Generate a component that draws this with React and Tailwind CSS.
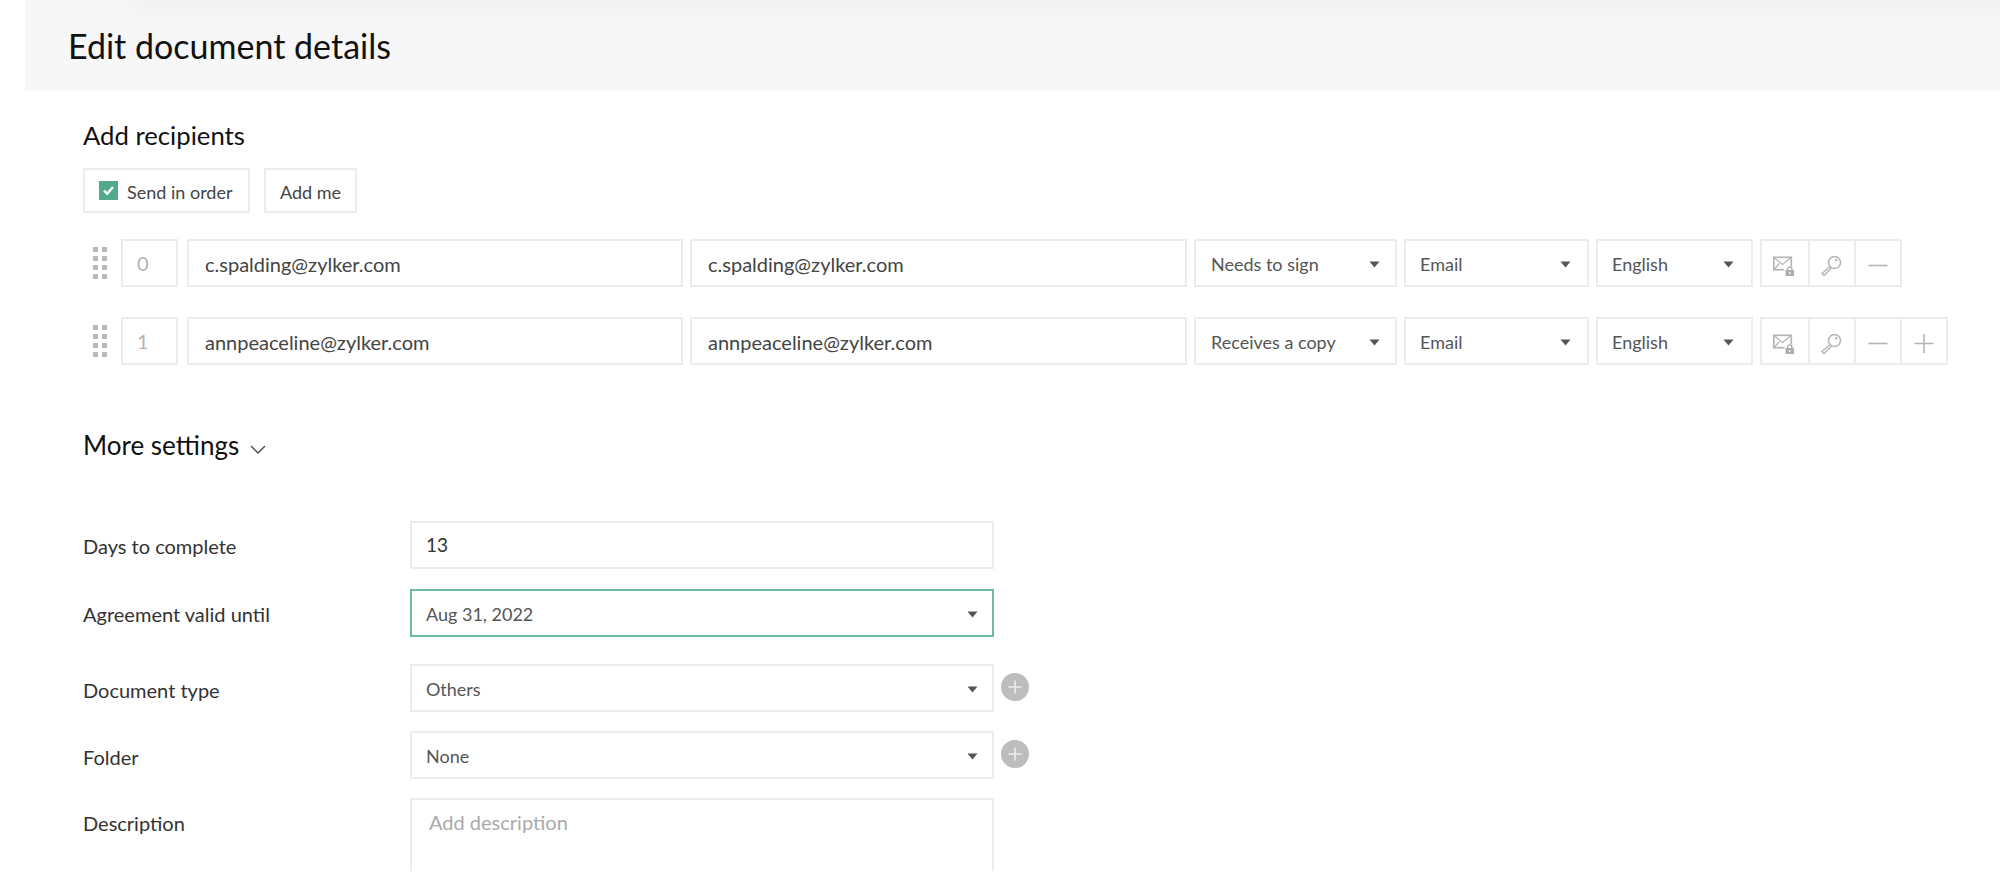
const FONT = "font-['Lato',sans-serif]";

function Caret({ className = "" }) {
  return (
    <svg width="11" height="7" viewBox="0 0 11 7" className={`shrink-0 mt-[2px] ${className}`}>
      <path d="M0.5 0.5h10L5.5 6.5z" fill="#555" />
    </svg>
  );
}

function Box({ w, children, className = "" }) {
  return (
    <div className={`h-[48px] border-2 border-[#ececec] flex items-center shrink-0 bg-white ${className}`} style={{ width: w }}>
      {children}
    </div>
  );
}

function Drag() {
  const dots = [];
  for (let r = 0; r < 4; r++) {
    for (let c = 0; c < 2; c++) {
      dots.push(<rect key={`${r}-${c}`} x={c * 9} y={r * 9} width="5" height="5" fill="#b9b9b9" />);
    }
  }
  return (
    <svg width="14" height="32" viewBox="0 0 14 32" className="ml-[10px] mr-[14px] shrink-0">
      {dots}
    </svg>
  );
}

function MailLock() {
  return (
    <svg width="32" height="32" viewBox="-15 -16 32 32" fill="none" stroke="#b5b5b5">
      <rect x="-10.2" y="-5.7" width="17.5" height="12.4" strokeWidth="1.7" />
      <path d="M-10 -5.5L-1.5 1.5L7 -5.5M-10 6.5L-4.5 0.5" strokeWidth="1.2" />
      <rect x="0.5" y="3.5" width="10.5" height="10" fill="#fff" stroke="none" />
      <rect x="1.5" y="7" width="8.5" height="6" rx="0.5" fill="#adadad" stroke="none" />
      <path d="M3.5 7V6a2.2 2.2 0 0 1 4.4 0V7" strokeWidth="1.3" stroke="#adadad" />
      <circle cx="5.7" cy="10" r="0.9" fill="#fff" stroke="none" />
    </svg>
  );
}

function KeyIcon() {
  return (
    <svg width="32" height="32" viewBox="-15 -16 32 32" fill="none" stroke="#b5b5b5">
      <circle cx="3.5" cy="-0.5" r="6" strokeWidth="1.6" />
      <circle cx="5.2" cy="-2.8" r="1.3" fill="#b5b5b5" stroke="none" />
      <path d="M-1 3.5L-9 10.5L-7 12.5L0.5 5" strokeWidth="1.4" />
    </svg>
  );
}

function MinusIcon() {
  return (
    <svg width="32" height="32" viewBox="-16 -16 32 32" stroke="#b5b5b5" strokeWidth="1.6">
      <path d="M-9.5 2.5H9.5" />
    </svg>
  );
}

function PlusIcon() {
  return (
    <svg width="32" height="32" viewBox="-16 -16 32 32" stroke="#b5b5b5" strokeWidth="1.6">
      <path d="M-9.5 2.5H9.5M0 -7V12" />
    </svg>
  );
}

function Actions({ plus }) {
  const cells = [<MailLock key="m" />, <KeyIcon key="k" />, <MinusIcon key="n" />];
  if (plus) cells.push(<PlusIcon key="p" />);
  return (
    <div className="flex shrink-0 h-[48px] border-2 border-[#ececec] bg-white">
      {cells.map((c, i) => (
        <div key={i} className={`w-[46px] flex items-center justify-center ${i > 0 ? "border-l-2 border-[#ececec]" : ""}`}>
          {c}
        </div>
      ))}
    </div>
  );
}

function Row({ n, email, role, plus, className = "" }) {
  return (
    <div className={`flex items-center ${className}`}>
      <Drag />
      <Box w="57px" className="pl-[14px] mr-[9px] text-[20px] text-[#b3b3b3]">{n}</Box>
      <div className="flex gap-[7px]">
        <Box w="496px" className="pl-[16px] text-[20px] text-[#444]"><span className="mt-[1px]">{email}</span></Box>
        <Box w="497px" className="pl-[16px] text-[20px] text-[#444]"><span className="mt-[1px]">{email}</span></Box>
        <Box w="203px" className="pl-[15px] pr-[15px] justify-between">
          <span className="text-[18px] text-[#555] mt-[3px]">{role}</span>
          <Caret />
        </Box>
        <Box w="185px" className="pl-[14px] pr-[16px] justify-between">
          <span className="text-[18px] text-[#555] mt-[3px]">Email</span>
          <Caret />
        </Box>
        <Box w="157px" className="pl-[14px] pr-[17px] justify-between">
          <span className="text-[18px] text-[#555] mt-[3px]">English</span>
          <Caret />
        </Box>
        <Actions plus={plus} />
      </div>
    </div>
  );
}

function FormRow({ label, children, mt, labelShift = "" }) {
  return (
    <div className={`flex items-center ${mt}`}>
      <div className={`w-[327px] text-[20px] text-[#333] shrink-0 ${labelShift}`}>{label}</div>
      {children}
    </div>
  );
}

function FormSelect({ value, active }) {
  return (
    <div className={`w-[584px] h-[48px] border-2 ${active ? "border-[#6bbda0]" : "border-[#ececec]"} flex items-center justify-between pl-[14px] pr-[14px] bg-white`}>
      <span className="text-[18px] text-[#555] mt-[3px]">{value}</span>
      <Caret />
    </div>
  );
}

function AddCircle() {
  return (
    <div className="w-[28px] h-[28px] rounded-full bg-[#bdbdbd] flex items-center justify-center ml-[7px] -mt-[3px] shrink-0">
      <svg width="14" height="14" viewBox="0 0 14 14" stroke="#eeeeee" strokeWidth="1.5">
        <path d="M0.5 7H13.5M7 0.5V13.5" />
      </svg>
    </div>
  );
}

export default function App() {
  return (
    <div className={`w-full h-[888px] bg-white overflow-hidden ${FONT}`}>
      <div className="h-[871px] overflow-hidden">
        <div className="relative ml-[25px] h-[91px] bg-[#f7f7f7] flex items-center pl-[43px]">
          <div className="absolute top-0 left-[85px] right-0 h-[24px] bg-gradient-to-b from-[#f0f0f0] to-transparent [mask-image:linear-gradient(to_right,transparent,black_60px)]" />
          <h1 className="relative text-[34px] text-[#111] font-normal">Edit document details</h1>
        </div>

        <div className="pl-[83px]">
          <h2 className="text-[25.7px] text-[#111] font-normal mt-[28px] leading-[32px]">Add recipients</h2>

          <div className="flex gap-[14px] mt-[17px]">
            <div className="w-[167px] h-[45px] border-2 border-[#ececec] flex items-center pl-[14px] gap-[9px]">
              <div className="w-[19px] h-[19px] bg-[#52a98c] flex items-center justify-center">
                <svg width="13" height="13" viewBox="0 0 13 13" fill="none" stroke="#fff" strokeWidth="2.4">
                  <path d="M2 6.5L5.2 9.7L11 3" />
                </svg>
              </div>
              <span className="text-[18px] text-[#444] mt-[3px]">Send in order</span>
            </div>
            <div className="w-[93px] h-[45px] border-2 border-[#ececec] flex items-center justify-center">
              <span className="text-[18px] text-[#444] mt-[3px]">Add me</span>
            </div>
          </div>

          <Row n="0" email="c.spalding@zylker.com" role="Needs to sign" className="mt-[26px]" />
          <Row n="1" email="annpeaceline@zylker.com" role="Receives a copy" plus className="mt-[30px]" />

          <div className="flex items-center mt-[64px] h-[34px]">
            <span className="text-[26px] text-[#111] -mt-[2px]">More settings</span>
            <svg width="16" height="9" viewBox="0 0 16 9" fill="none" stroke="#444" strokeWidth="1.3" className="ml-[11px] mt-[6px]">
              <path d="M1 1L8 8L15 1" />
            </svg>
          </div>

          <FormRow label="Days to complete" mt="mt-[58px]" labelShift="mt-[2px]">
            <div className="w-[584px] h-[48px] border-2 border-[#ececec] flex items-center pl-[14px] text-[19px] text-[#333]">13</div>
          </FormRow>
          <FormRow label="Agreement valid until" mt="mt-[20px]" labelShift="mt-[1px]">
            <FormSelect value="Aug 31, 2022" active />
          </FormRow>
          <FormRow label="Document type" mt="mt-[27px]" labelShift="mt-[4px]">
            <FormSelect value="Others" />
            <AddCircle />
          </FormRow>
          <FormRow label="Folder" mt="mt-[19px]" labelShift="mt-[3px]">
            <FormSelect value="None" />
            <AddCircle />
          </FormRow>
          <div className="flex mt-[19px]">
            <div className="w-[327px] text-[20px] text-[#333] mt-[10px] shrink-0">Description</div>
            <div className="w-[584px] h-[120px] border-2 border-[#ececec] pl-[17px] pt-[7px] text-[20px] text-[#aaa]">Add description</div>
          </div>
        </div>
      </div>
    </div>
  );
}
